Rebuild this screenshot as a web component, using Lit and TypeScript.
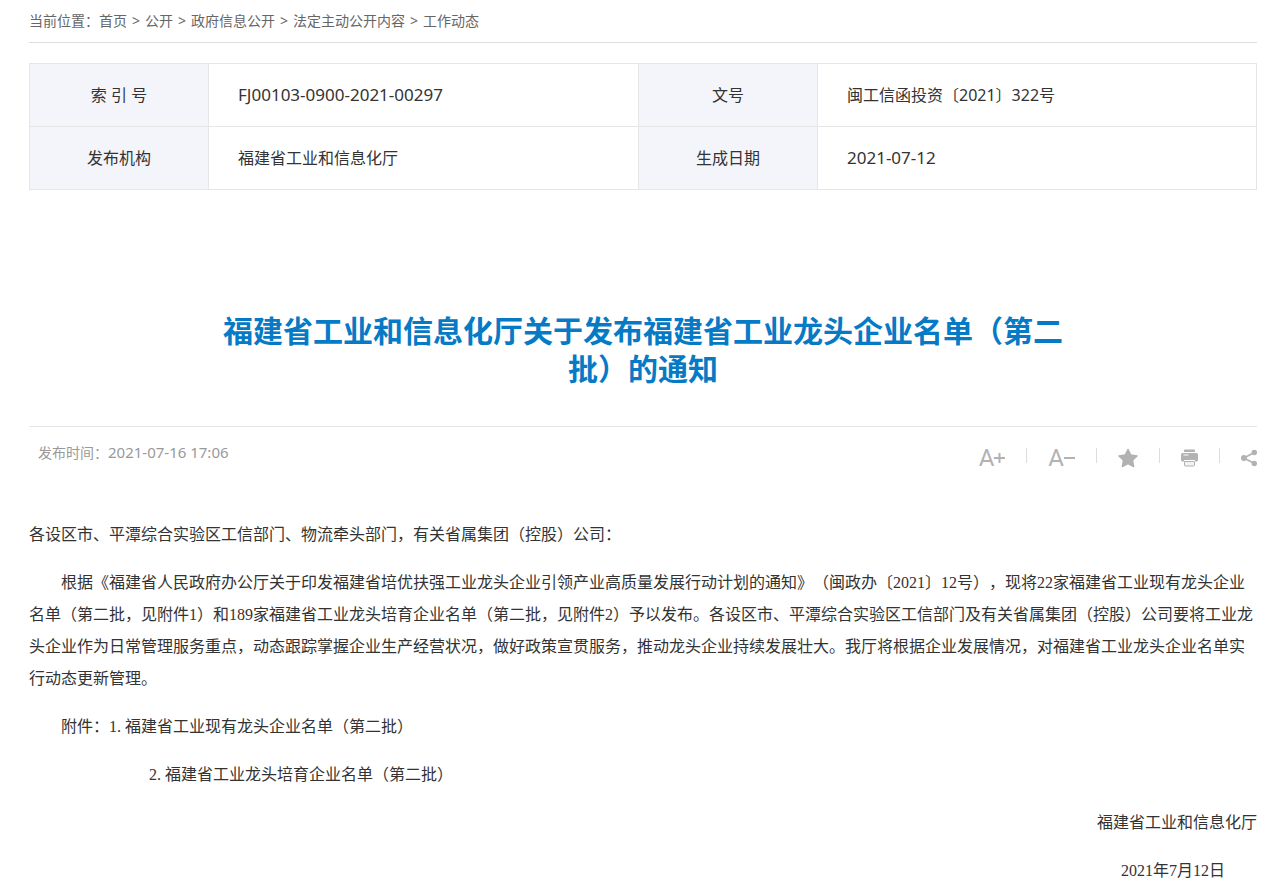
import { LitElement, html, css, svg } from "lit";
import { customElement } from "lit/decorators.js";

const crumbs = ["首页", "公开", "政府信息公开", "法定主动公开内容", "工作动态"];

const icons = {
  plus: svg`<path d="M5.500 1v10M0 6h11" stroke="currentColor" stroke-width="2" fill="none"/>`,
  minus: svg`<path d="M0 6h11" stroke="currentColor" stroke-width="2" fill="none"/>`,
};

@customElement("app-root")
export class AppRoot extends LitElement {
  static styles = css`
    :host {
      display: block;
      background: #fff;
      color: #333;
      font: 16px/24px "Noto Sans", "Noto Sans CJK SC", sans-serif;
      text-spacing-trim: space-all;
    }
    .page {
      padding: 0 15px 0 29px;
    }
    a {
      color: inherit;
      text-decoration: none;
    }
    .crumbs {
      display: flex;
      align-items: center;
      height: 42px;
      border-bottom: 1px solid #ddd;
      color: #666;
      font-size: 14px;
    }
    .crumbs ol {
      display: flex;
      margin: 0;
      padding: 0;
      list-style: none;
    }
    .crumbs li + li::before {
      content: ">";
      padding: 0 5px;
    }
    .info {
      width: 100%;
      margin-top: 20px;
      border-collapse: collapse;
      table-layout: fixed;
    }
    .info th,
    .info td {
      height: 62px;
      padding: 0;
      border: 1px solid #e6e6e6;
      font-weight: 400;
    }
    .info th {
      width: 178px;
      background: #f3f5fa;
      text-align: center;
    }
    .info td {
      padding-left: 29px;
      text-align: left;
    }
    .info .first {
      width: 400px;
    }
    .code {
      font-size: 17px;
    }
    h1 {
      width: 70%;
      margin: 122px auto 38px;
      color: #067ac5;
      font-size: 30px;
      line-height: 38px;
      font-weight: 700;
      text-align: center;
    }
    .meta {
      display: flex;
      justify-content: space-between;
      align-items: flex-start;
      height: 76px;
      border-top: 1px solid #e6e6e6;
      color: #999;
    }
    .time {
      padding: 13px 0 0 9px;
      font-size: 14px;
    }
    .time time {
      font-size: 15px;
    }
    .tools {
      display: flex;
      align-items: center;
      gap: 21px;
      padding-top: 19px;
      color: #b2b2b2;
    }
    .tools button {
      display: flex;
      align-items: center;
      height: 24px;
      padding: 0;
      border: 0;
      background: none;
      color: inherit;
      font: 24px/24px Roboto, sans-serif;
      cursor: pointer;
    }
    .tools svg {
      display: block;
    }
    .bar {
      width: 1px;
      height: 15px;
      margin-bottom: 6px;
      background: #ddd;
    }
    .body {
      padding-bottom: 1px;
      font-family: "Liberation Serif", "Noto Sans CJK SC", serif;
      line-height: 32px;
    }
    .body p {
      margin: 16px 0;
    }
    .indent {
      text-indent: 32px;
    }
    .attach {
      padding-left: 32px;
    }
    .attach.second {
      padding-left: 120px;
    }
    .num {
      display: inline-block;
      width: 16px;
    }
    .sign {
      text-align: right;
    }
    .date {
      padding-right: 32px;
    }
  `;

  render() {
    return html`
      <main class="page">
        <nav class="crumbs" aria-label="当前位置">
          <span>当前位置：</span>
          <ol>
            ${crumbs.map((c) => html`<li><a href="#">${c}</a></li>`)}
          </ol>
        </nav>
        <table class="info">
          <tbody>
            <tr>
              <th scope="row">索 引 号</th>
              <td class="first"><span class="code">FJ00103-0900-2021-00297</span></td>
              <th scope="row">文号</th>
              <td>闽工信函投资〔2021〕322号</td>
            </tr>
            <tr>
              <th scope="row">发布机构</th>
              <td>福建省工业和信息化厅</td>
              <th scope="row">生成日期</th>
              <td><span class="code">2021-07-12</span></td>
            </tr>
          </tbody>
        </table>
        <h1>福建省工业和信息化厅关于发布福建省工业龙头企业名单（第二批）的通知</h1>
        <div class="meta">
          <div class="time">发布时间：<time>2021-07-16 17:06</time></div>
          <div class="tools">
            <button type="button" aria-label="增大字号">A<svg width="11" height="12" viewBox="0 0 11 12">${icons.plus}</svg></button>
            <span class="bar"></span>
            <button type="button" aria-label="减小字号">A<svg width="11" height="12" viewBox="0 0 11 12">${icons.minus}</svg></button>
            <span class="bar"></span>
            <button type="button" aria-label="收藏">
              <svg width="20" height="20" viewBox="0 0 20 20"><path fill="currentColor" stroke="currentColor" stroke-width="1.500" stroke-linejoin="round" d="M10 1.500l2.800 5.500 6.200.9-4.500 4.300 1.100 6.300L10 15.700l-5.600 2.800 1.100-6.300L1 7.900 7.200 7z"/></svg>
            </button>
            <span class="bar"></span>
            <button type="button" aria-label="打印">
              <svg width="17" height="18" viewBox="0 0 17 18"><path fill="currentColor" d="M4 .5h9a1 1 0 0 1 1 1V3H3V1.500a1 1 0 0 1 1-1zM1.500 4h14A1.500 1.500 0 0 1 17 5.500V11a1.500 1.500 0 0 1-1.500 1.500H14V11H3v1.500H1.500A1.500 1.500 0 0 1 0 11V5.500A1.500 1.500 0 0 1 1.500 4z"/><path fill="#fff" d="M2.500 5.500h5v1h-5z"/><path fill="#f2f2f2" stroke="currentColor" d="M3.500 12.500h10v3.500a1 1 0 0 1-1 1h-8a1 1 0 0 1-1-1z"/></svg>
            </button>
            <span class="bar"></span>
            <button type="button" aria-label="分享">
              <svg width="16" height="18" viewBox="0 0 16 18"><path d="M13.300 3.500L3 9l10.300 5.500" fill="none" stroke="currentColor" stroke-width="1.700"/><g fill="currentColor"><circle cx="13.300" cy="3.500" r="2.700"/><circle cx="2.900" cy="9" r="2.900"/><circle cx="13.300" cy="14.500" r="2.700"/></g></svg>
            </button>
          </div>
        </div>
        <article class="body">
          <p>各设区市、平潭综合实验区工信部门、物流牵头部门，有关省属集团（控股）公司：</p>
          <p class="indent">根据《福建省人民政府办公厅关于印发福建省培优扶强工业龙头企业引领产业高质量发展行动计划的通知》（闽政办〔2021〕12号），现将22家福建省工业现有龙头企业名单（第二批，见附件1）和189家福建省工业龙头培育企业名单（第二批，见附件2）予以发布。各设区市、平潭综合实验区工信部门及有关省属集团（控股）公司要将工业龙头企业作为日常管理服务重点，动态跟踪掌握企业生产经营状况，做好政策宣贯服务，推动龙头企业持续发展壮大。我厅将根据企业发展情况，对福建省工业龙头企业名单实行动态更新管理。</p>
          <p class="attach">附件：<span class="num">1.</span>福建省工业现有龙头企业名单（第二批）</p>
          <p class="attach second"><span class="num">2.</span>福建省工业龙头培育企业名单（第二批）</p>
          <p class="sign">福建省工业和信息化厅</p>
          <p class="sign date">2021年7月12日</p>
        </article>
      </main>
    `;
  }
}
